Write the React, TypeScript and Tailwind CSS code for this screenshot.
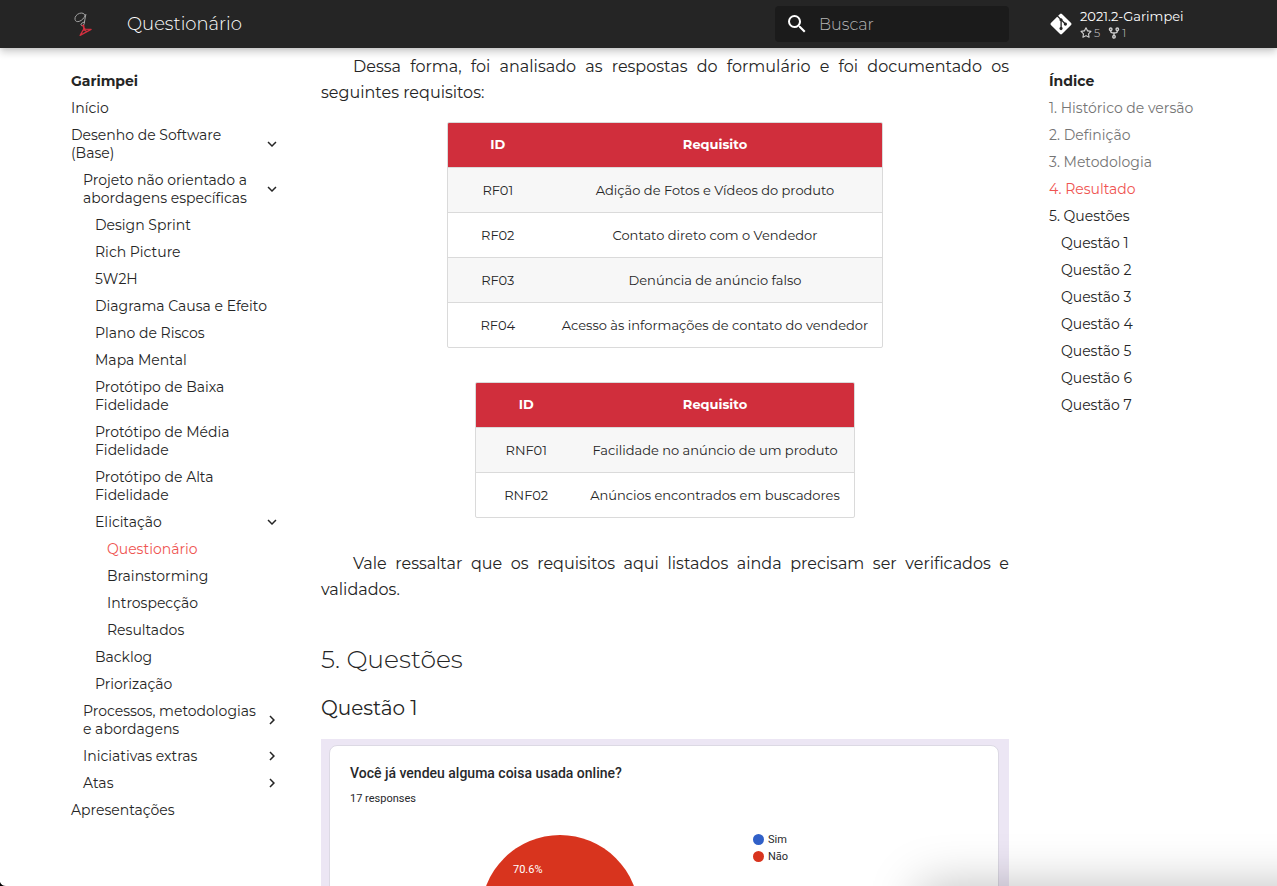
import React from "react";
import { FaGitAlt } from "react-icons/fa";

type NavItem = {
  label: string;
  level: 0 | 1 | 2 | 3;
  state?: "open" | "closed";
  active?: boolean;
};

const nav: NavItem[] = [
  { label: "Início", level: 0 },
  { label: "Desenho de Software (Base)", level: 0, state: "open" },
  { label: "Projeto não orientado a abordagens específicas", level: 1, state: "open" },
  { label: "Design Sprint", level: 2 },
  { label: "Rich Picture", level: 2 },
  { label: "5W2H", level: 2 },
  { label: "Diagrama Causa e Efeito", level: 2 },
  { label: "Plano de Riscos", level: 2 },
  { label: "Mapa Mental", level: 2 },
  { label: "Protótipo de Baixa Fidelidade", level: 2 },
  { label: "Protótipo de Média Fidelidade", level: 2 },
  { label: "Protótipo de Alta Fidelidade", level: 2 },
  { label: "Elicitação", level: 2, state: "open" },
  { label: "Questionário", level: 3, active: true },
  { label: "Brainstorming", level: 3 },
  { label: "Introspecção", level: 3 },
  { label: "Resultados", level: 3 },
  { label: "Backlog", level: 2 },
  { label: "Priorização", level: 2 },
  { label: "Processos, metodologias e abordagens", level: 1, state: "closed" },
  { label: "Iniciativas extras", level: 1, state: "closed" },
  { label: "Atas", level: 1, state: "closed" },
  { label: "Apresentações", level: 0 },
];

const indents = ["pl-0", "pl-3", "pl-6", "pl-9"];

const toc = [
  { label: "1. Histórico de versão", style: "text-[#757575]" },
  { label: "2. Definição", style: "text-[#757575]" },
  { label: "3. Metodologia", style: "text-[#757575]" },
  { label: "4. Resultado", style: "text-[#ef5552]" },
  { label: "5. Questões", style: "" },
  { label: "Questão 1", style: "pl-3" },
  { label: "Questão 2", style: "pl-3" },
  { label: "Questão 3", style: "pl-3" },
  { label: "Questão 4", style: "pl-3" },
  { label: "Questão 5", style: "pl-3" },
  { label: "Questão 6", style: "pl-3" },
  { label: "Questão 7", style: "pl-3" },
];

const functional = [
  ["RF01", "Adição de Fotos e Vídeos do produto"],
  ["RF02", "Contato direto com o Vendedor"],
  ["RF03", "Denúncia de anúncio falso"],
  ["RF04", "Acesso às informações de contato do vendedor"],
];

const nonFunctional = [
  ["RNF01", "Facilidade no anúncio de um produto"],
  ["RNF02", "Anúncios encontrados em buscadores"],
];

function Chevron({ open }: { open: boolean }) {
  return (
    <svg viewBox="0 0 24 24" className="size-[18px] shrink-0" fill="currentColor" aria-hidden="true">
      {open ? (
        <path d="M7.41 8.58 12 13.17l4.59-4.59L18 10l-6 6-6-6 1.41-1.42Z" />
      ) : (
        <path d="M8.59 16.58 13.17 12 8.59 7.41 10 6l6 6-6 6-1.41-1.42Z" />
      )}
    </svg>
  );
}

function StarIcon() {
  return (
    <svg viewBox="0 0 16 16" className="size-3" fill="currentColor" aria-hidden="true">
      <path
        fillRule="evenodd"
        d="M8 .25a.75.75 0 0 1 .673.418l1.882 3.815 4.21.612a.75.75 0 0 1 .416 1.279l-3.046 2.970.719 4.192a.75.75 0 0 1-1.088.791L8 12.347l-3.766 1.980a.75.75 0 0 1-1.088-.790l.720-4.194L.818 6.374a.75.75 0 0 1 .416-1.280l4.210-.611L7.327.668A.75.75 0 0 1 8 .25Zm0 2.445L6.615 5.500a.75.75 0 0 1-.564.410l-3.097.450 2.240 2.184a.75.75 0 0 1 .216.664l-.528 3.084 2.769-1.456a.75.75 0 0 1 .698 0l2.770 1.456-.530-3.084a.75.75 0 0 1 .216-.664l2.240-2.183-3.096-.450a.75.75 0 0 1-.564-.410L8 2.694Z"
      />
    </svg>
  );
}

function ForkIcon() {
  return (
    <svg viewBox="0 0 16 16" className="size-3" fill="none" stroke="currentColor" strokeWidth="1.8" aria-hidden="true">
      <circle cx="3.600" cy="3" r="1.700" />
      <circle cx="12.400" cy="3" r="1.700" />
      <circle cx="8" cy="13" r="1.700" />
      <path d="M3.600 4.800v1C3.600 7 4.600 7.800 5.800 7.800h4.400c1.200 0 2.200-.8 2.200-2v-1M8 7.800v3.500" />
    </svg>
  );
}

function Logo() {
  return (
    <svg viewBox="0 0 24 24" className="size-6" fill="none" strokeLinecap="round" strokeLinejoin="round">
      <g stroke="#b0b0b0" strokeWidth="0.9">
        <path d="M14.200 3.600C13.600 1.300 11 .5 8.400 1.400 5.400 2.400 3.600 5 4 7.400c.3 2 2.200 2.700 4.400 1.900 2.600-.9 4.700-3.200 5.800-5.700" />
        <path d="M14.800 2.400C13.900 5.500 13.900 9 13.200 11.800c-.5 1.900-2.600 2.400-3.200 1.200-.4-1.200 1-2.300 3.400-3" />
      </g>
      <path
        d="M11.200 13.600c1-.7 1.900-.2 1.700.9-.1 1.300.4 2.200 1.300 2.600l5.900.3-11 6 3.300-5.800c.6-1.200.3-2.300-.2-3.200M12.600 17.400l2.800 1.800"
        stroke="#d32f3f"
        strokeWidth="1.200"
      />
    </svg>
  );
}

function Header() {
  return (
    <header className="relative z-10 flex h-12 shrink-0 items-center bg-[#252525] pr-[2px] pl-[55px] text-white shadow-[0_0_4px_rgba(0,0,0,0.1),0_4px_8px_rgba(0,0,0,0.2)]">
      <a href="#inicio" aria-label="Garimpei" className="ml-4 flex">
        <Logo />
      </a>
      <span className="ml-8 flex-1 text-lg leading-6 font-light">Questionário</span>
      <label className="flex h-9 w-[234px] items-center rounded-sm bg-[#1b1b1b] px-[10px]">
        <svg viewBox="0 0 24 24" className="size-6 shrink-0" fill="currentColor" aria-hidden="true">
          <path d="M9.500 3A6.500 6.500 0 0 1 16 9.500c0 1.610-.590 3.090-1.560 4.230l.270.270h.790l5 5-1.500 1.500-5-5v-.790l-.270-.270A6.516 6.516 0 0 1 9.500 16 6.500 6.500 0 0 1 3 9.500 6.500 6.500 0 0 1 9.500 3m0 2C7 5 5 7 5 9.500S7 14 9.500 14 14 12 14 9.500 12 5 9.500 5Z" />
        </svg>
        <input
          type="text"
          aria-label="Buscar"
          placeholder="Buscar"
          className="ml-[10px] h-6 min-w-0 flex-1 bg-transparent pt-px text-base font-light outline-none placeholder:text-[#b5b5b5]"
        />
      </label>
      <div className="flex w-[266px] items-center pl-10">
        <a href="#repositorio" className="flex items-center gap-[7px]">
          <FaGitAlt className="size-6" />
          <span>
            <span className="block text-[13px] leading-4">2021.2-Garimpei</span>
            <span className="flex items-center gap-2 pt-px text-[11px] leading-4 font-light text-[#cfcfcf]">
              <span className="flex items-center gap-[2px]">
                <StarIcon />5
              </span>
              <span className="flex items-center gap-[2px]">
                <ForkIcon />1
              </span>
            </span>
          </span>
        </a>
      </div>
    </header>
  );
}

function Requirements({ rows }: { rows: string[][] }) {
  return (
    <div className="overflow-hidden rounded-xs border border-[#dadada]">
      <table className="border-collapse text-center text-[13px] leading-5">
        <thead className="bg-[#d02e3c] text-white">
          <tr>
            <th className="min-w-[100px] px-[14px] pt-[11px] pb-[13px] font-bold">ID</th>
            <th className="min-w-[100px] px-[14px] pt-[11px] pb-[13px] font-bold">Requisito</th>
          </tr>
        </thead>
        <tbody>
          {rows.map(([id, text]) => (
            <tr key={id} className="border-t border-[#dadada] odd:bg-[#f7f7f7]">
              <td className="px-[14px] py-3">{id}</td>
              <td className="px-[14px] py-3">{text}</td>
            </tr>
          ))}
        </tbody>
      </table>
    </div>
  );
}

function SurveyChart() {
  return (
    <figure className="mt-[15px] bg-[#ece6f4] pt-[6px] pr-[10px] pl-[8px] font-['Roboto',sans-serif] text-[#27282b]">
      <div className="rounded-lg border border-[#dcd9e4] bg-white px-5 pt-[17px] pb-8">
        <figcaption>
          <div className="text-sm leading-5 font-medium">Você já vendeu alguma coisa usada online?</div>
          <div className="mt-2 text-[11px] leading-4">17 responses</div>
        </figcaption>
        <div className="flex items-start pt-7 pl-[131px]">
          <svg viewBox="0 0 158 158" className="size-[158px]" role="img" aria-label="Não 70.6%, Sim 29.4%">
            <circle cx="79" cy="79" r="79" fill="#d8341e" />
            <path d="M79 79 L142 127 A79 79 0 0 1 16 127 Z" fill="#3060c8" />
            <text x="32" y="38" fontSize="11" fill="#fff">
              70.6%
            </text>
          </svg>
          <ul className="-mt-1 ml-[114px] text-[11px] leading-[17px]">
            <li className="flex items-center gap-1">
              <span className="size-[11px] rounded-full bg-[#3060c8]" />
              Sim
            </li>
            <li className="flex items-center gap-1">
              <span className="size-[11px] rounded-full bg-[#d8341e]" />
              Não
            </li>
          </ul>
        </div>
      </div>
    </figure>
  );
}

export default function App() {
  return (
    <div className="flex h-screen flex-col overflow-hidden bg-white font-['Montserrat','Inter',sans-serif] text-[#252525]">
      <Header />
      <div className="flex min-h-0 flex-1 items-start pr-[2px] pl-[55px]">
        <nav className="w-[242px] shrink-0 pt-6 pr-4 pl-4 text-sm leading-[18px]" aria-label="Garimpei">
          <div className="font-bold">Garimpei</div>
          <ul>
            {nav.map((item) => (
              <li key={item.label} className={`mt-[9px] ${indents[item.level]}`}>
                <a
                  href="#nav"
                  className={`flex items-center justify-between ${item.active ? "text-[#ef5552]" : ""}`}
                >
                  <span className={item.state ? "" : "-mr-2"}>{item.label}</span>
                  {item.state && <Chevron open={item.state === "open"} />}
                </a>
              </li>
            ))}
          </ul>
        </nav>

        <main className="min-w-0 flex-1 px-6 pt-[6px] text-base leading-[26px]">
          <p className="text-justify indent-8">
            Dessa forma, foi analisado as respostas do formulário e foi documentado os seguintes requisitos:
          </p>
          <div className="mt-4 flex flex-col items-center gap-[34px]">
            <Requirements rows={functional} />
            <Requirements rows={nonFunctional} />
          </div>
          <p className="mt-[33px] text-justify indent-8">
            Vale ressaltar que os requisitos aqui listados ainda precisam ser verificados e validados.
          </p>
          <h2 className="mt-[38px] text-[25px] leading-9 font-light">5. Questões</h2>
          <h3 className="mt-[15px] text-xl leading-8">Questão 1</h3>
          <SurveyChart />
        </main>

        <nav className="w-[242px] shrink-0 pt-6 pr-4 pl-4 text-sm leading-[18px]" aria-label="Índice">
          <div className="font-bold">Índice</div>
          <ul>
            {toc.map((item) => (
              <li key={item.label} className={`mt-[9px] ${item.style}`}>
                <a href="#secao">{item.label}</a>
              </li>
            ))}
          </ul>
        </nav>
      </div>
      <div className="pointer-events-none fixed right-[-80px] bottom-[-80px] left-[920px] h-20 shadow-[0_0_50px_rgba(0,0,0,0.26)]" />
      <svg viewBox="0 0 6 4" className="pointer-events-none fixed bottom-0 left-0 h-1 w-[6px]" aria-hidden="true">
        <path d="M0 0C1 2.500 3 4 6 4H0Z" fill="#000" />
      </svg>
    </div>
  );
}
